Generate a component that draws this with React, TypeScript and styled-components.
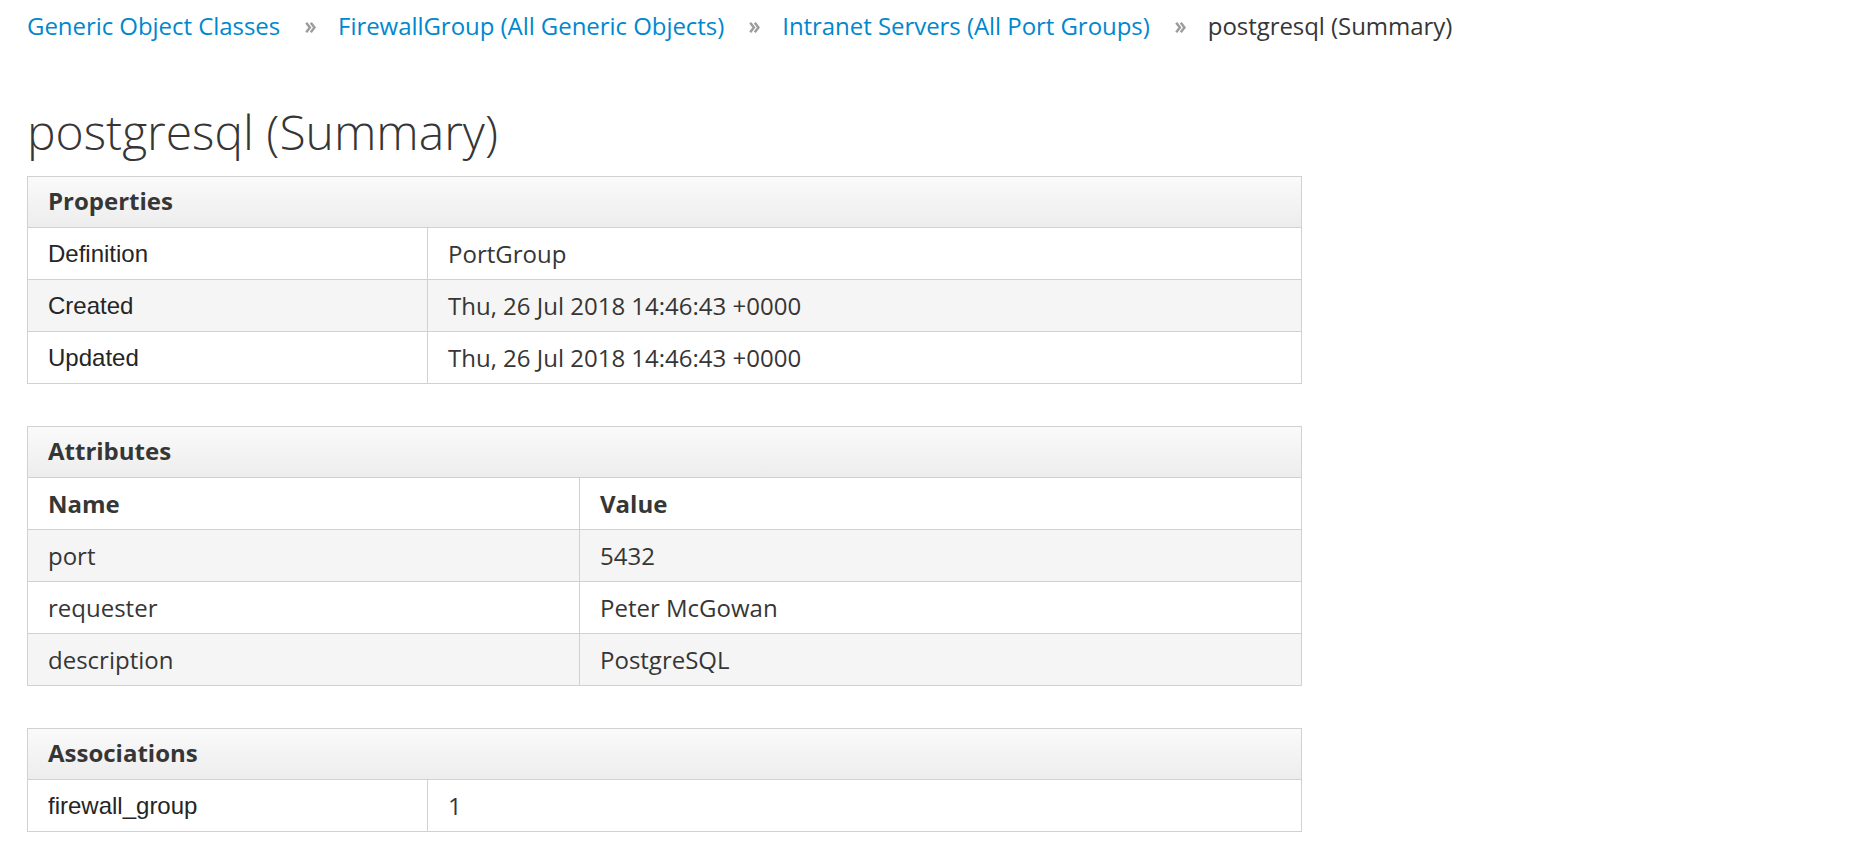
import styled, { createGlobalStyle } from "styled-components";

const GlobalStyle = createGlobalStyle`
  html, body {
    margin: 0;
    padding: 0;
    background: #ffffff;
  }
  body {
    font-family: "Open Sans", "Liberation Sans", sans-serif;
    color: #363636;
  }
`;

const colors = {
  link: "#0088ce",
  text: "#363636",
  label: "#252525",
  border: "#d1d1d1",
  stripe: "#f5f5f5",
  sep: "#9c9c9c",
};

type Row = [string, string];

const properties: Row[] = [
  ["Definition", "PortGroup"],
  ["Created", "Thu, 26 Jul 2018 14:46:43 +0000"],
  ["Updated", "Thu, 26 Jul 2018 14:46:43 +0000"],
];

const attributes: Row[] = [
  ["port", "5432"],
  ["requester", "Peter McGowan"],
  ["description", "PostgreSQL"],
];

const associations: Row[] = [["firewall_group", "1"]];

const crumbs = [
  "Generic Object Classes",
  "FirewallGroup (All Generic Objects)",
  "Intranet Servers (All Port Groups)",
];

const Separator = () => (
  <Sep>
    <svg width="11" height="13" viewBox="0 0 11 13">
      <path
        d="M1.2 1.8 L4.9 6.5 L1.2 11.2 M5.8 1.8 L9.5 6.5 L5.8 11.2"
        fill="none"
        stroke={colors.sep}
        strokeWidth="2.5"
      />
    </svg>
  </Sep>
);

const Panel = ({
  title,
  rows,
  labelWidth,
  header,
  plainLabels,
}: {
  title: string;
  rows: Row[];
  labelWidth: number;
  header?: Row;
  plainLabels?: boolean;
}) => (
  <PanelBox>
    <Heading>{title}</Heading>
    {header && (
      <TableRow labelWidth={labelWidth}>
        <HeadCell>{header[0]}</HeadCell>
        <HeadCell divider>{header[1]}</HeadCell>
      </TableRow>
    )}
    {rows.map(([k, v]) => (
      <TableRow key={k} labelWidth={labelWidth}>
        <Cell arial={plainLabels}>{k}</Cell>
        <Cell divider>{v}</Cell>
      </TableRow>
    ))}
  </PanelBox>
);

export default function App() {
  return (
    <Page>
      <GlobalStyle />
      <Breadcrumb>
        {crumbs.map((c) => (
          <Crumb key={c}>
            <CrumbLink href="#">{c}</CrumbLink>
            <Separator />
          </Crumb>
        ))}
        <Current>postgresql (Summary)</Current>
      </Breadcrumb>
      <Title>postgresql (Summary)</Title>
      <Panel title="Properties" rows={properties} labelWidth={399} plainLabels />
      <Panel
        title="Attributes"
        rows={attributes}
        labelWidth={551}
        header={["Name", "Value"]}
      />
      <Panel
        title="Associations"
        rows={associations}
        labelWidth={399}
        plainLabels
      />
    </Page>
  );
}

const Page = styled.div`
  padding: 9px 0 0 27px;
`;

const Breadcrumb = styled.div`
  display: flex;
  align-items: center;
  font-size: 24px;
  line-height: 34px;
  letter-spacing: -0.05px;
`;

const Crumb = styled.div`
  display: flex;
  align-items: center;
`;

const CrumbLink = styled.a`
  color: ${colors.link};
  text-decoration: none;
`;

const Sep = styled.span`
  display: flex;
  align-items: center;
  margin: 0 22px 0 25px;
  padding-top: 2px;
`;

const Current = styled.span`
  color: ${colors.text};
`;

const Title = styled.h1`
  margin: 62px 0 18px;
  font-size: 48px;
  font-weight: 300;
  line-height: 53px;
  color: ${colors.text};
`;

const PanelBox = styled.div`
  width: 1273px;
  border: 1px solid ${colors.border};
  margin-bottom: 42px;
  &:last-child {
    margin-bottom: 0;
  }
`;

const Heading = styled.div`
  box-sizing: border-box;
  height: 50px;
  display: flex;
  align-items: center;
  padding: 0 20px 3px;
  font-size: 24px;
  font-weight: 700;
  color: ${colors.text};
  background-image: linear-gradient(to bottom, #fafafa 0%, #ededed 100%);
`;

const TableRow = styled.div<{ labelWidth: number }>`
  display: grid;
  grid-template-columns: ${(p) => p.labelWidth}px 1fr;
  height: 51px;
  border-top: 1px solid ${colors.border};
  background: #ffffff;
  &:nth-child(odd) {
    background: ${colors.stripe};
  }
`;

const Cell = styled.div<{ divider?: boolean; arial?: boolean }>`
  display: flex;
  align-items: center;
  padding: 0 20px;
  font-size: 24px;
  font-family: ${(p) =>
    p.arial ? `"Liberation Sans", Arial, sans-serif` : `"Open Sans", sans-serif`};
  color: ${(p) => (p.arial ? colors.label : colors.text)};
  border-left: ${(p) => (p.divider ? `1px solid ${colors.border}` : "none")};
`;

const HeadCell = styled(Cell)`
  font-weight: 700;
`;
